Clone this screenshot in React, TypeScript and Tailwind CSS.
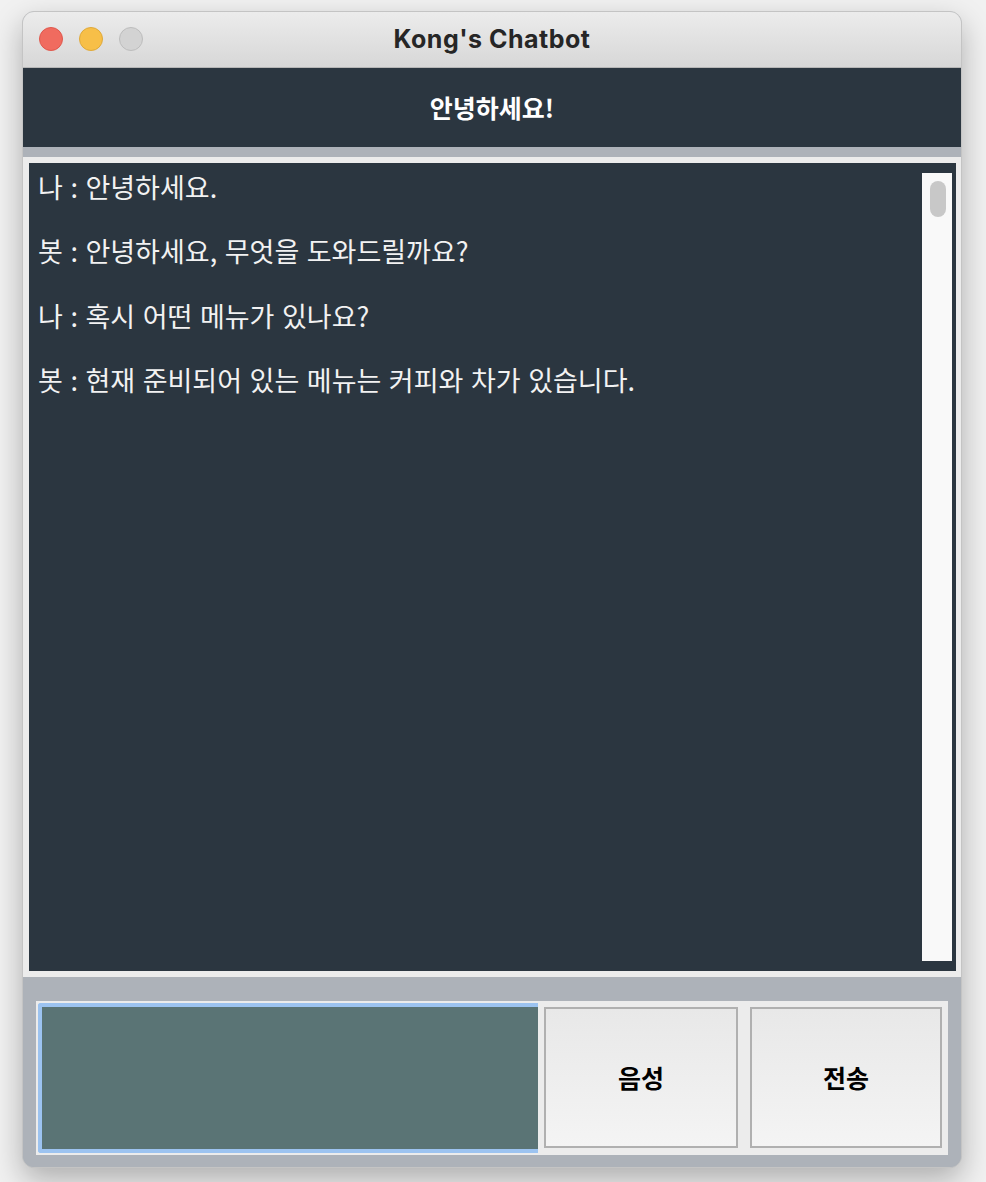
import React from "react";

const messages = [
  "나 : 안녕하세요.",
  "봇 : 안녕하세요, 무엇을 도와드릴까요?",
  "나 : 혹시 어떤 메뉴가 있나요?",
  "봇 : 현재 준비되어 있는 메뉴는 커피와 차가 있습니다.",
];

export default function App() {
  return (
    <div className="min-h-[1182px] w-[986px] bg-[#f1f1f1] pl-[22px] pt-[11px] font-['Noto_Sans_CJK_KR',sans-serif]">
      <div className="flex h-[1157px] w-[940px] flex-col overflow-hidden rounded-[12px] border border-[#c4c4c4] bg-[#adb2b9] shadow-[0_12px_30px_rgba(0,0,0,0.28)]">
        {/* Title bar */}
        <div className="relative flex h-[56px] shrink-0 items-center justify-center border-b border-[#b6b6b6] bg-gradient-to-b from-[#ececec] to-[#d7d7d7]">
          <div className="absolute left-[16px] top-[15px] flex gap-[16px]">
            <div className="h-[24px] w-[24px] rounded-full border border-[#e0584d] bg-[#f06b5f]" />
            <div className="h-[24px] w-[24px] rounded-full border border-[#dfa93a] bg-[#f7bf48]" />
            <div className="h-[24px] w-[24px] rounded-full border border-[#bdbdbd] bg-[#d3d3d3]" />
          </div>
          <span className="font-['Inter',sans-serif] text-[25px] font-bold tracking-[0.5px] text-[#262626]">
            Kong's Chatbot
          </span>
        </div>

        {/* Header */}
        <div className="flex h-[79px] shrink-0 items-center justify-center bg-[#2b3640]">
          <span className="text-[25px] font-bold text-white">안녕하세요!</span>
        </div>

        {/* Gray strip */}
        <div className="h-[10px] shrink-0 bg-[#adb2b9]" />

        {/* Chat panel */}
        <div className="h-[820px] shrink-0 bg-[#ececec] p-[6px] pr-[5px]">
          <div className="flex h-full bg-[#2b3640]">
            <div className="flex-1 pl-[9px] pt-[6px]">
              {messages.map((m, i) => (
                <div
                  key={i}
                  className="h-[64.3px] text-[27px] leading-[36px] text-[#f2f2f2] [word-spacing:1.5px]"
                >
                  {m}
                </div>
              ))}
            </div>
            <div className="my-[10px] mr-[4px] w-[30px] bg-[#f9f9f9] pl-[8px] pt-[8px]">
              <div className="h-[36px] w-[16px] rounded-full bg-[#c8c8c8]" />
            </div>
          </div>
        </div>

        {/* Bottom area */}
        <div className="flex-1 bg-[#adb2b9] px-[13px] pt-[24px]">
          <div className="flex h-[154px] bg-[#ececec] p-[2px] pr-[6px]">
            <div className="h-[150px] w-[500px] rounded-l-[3px] border-y-[4px] border-l-[4px] border-[#9cc3f0] bg-[#5a7475]" />
            <div className="ml-[6px] mt-[4px] flex h-[141px] w-[194px] items-center justify-center border-2 border-[#b0b0b0] bg-gradient-to-b from-[#e8e8e8] to-[#f4f4f4]">
              <span className="text-[25px] font-bold text-black">음성</span>
            </div>
            <div className="ml-[12px] mt-[4px] flex h-[141px] w-[192px] items-center justify-center border-2 border-[#b0b0b0] bg-gradient-to-b from-[#e8e8e8] to-[#f4f4f4]">
              <span className="text-[25px] font-bold text-black">전송</span>
            </div>
          </div>
        </div>
      </div>
    </div>
  );
}
